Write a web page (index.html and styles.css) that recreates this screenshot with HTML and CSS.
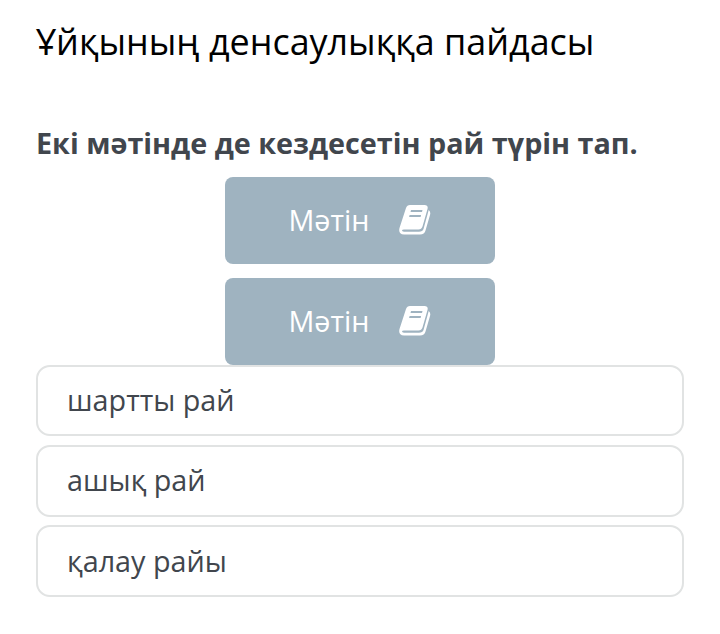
FILE: index.html
```html
<!DOCTYPE html>
<html lang="kk">
<head>
  <meta charset="UTF-8" />
  <title>Ұйқының денсаулыққа пайдасы</title>
  <meta name="viewport" content="width=device-width, initial-scale=1.0" />
  <link rel="stylesheet" href="styles.css">
</head>
<body>

<h1>Ұйқының денсаулыққа пайдасы</h1>

<h2>Екі мәтінде де кездесетін рай түрін тап.</h2>

<!-- Text buttons -->
<div class="texts">
  <button class="btn" type="button">
    <span>Мәтін</span>
    <svg class="icon" viewBox="0 0 32 30">
      <path fill="#fff" fill-rule="evenodd" d="M11 0H25.500Q29.500 0 28.500 4L23.500 21.500Q22.500 24.500 19.500 24.500H5Q3 24.500 3 25.600Q3 26.700 5 26.700H20Q23.500 26.700 24.500 24L29.700 5Q32 7 31 10L26.500 25.500Q25.500 29.500 21 29.500H5Q-1 29.500 .5 23L7 3Q8 0 11 0ZM12 5L11.500 7H23L23.500 5ZM10.600 10L10.100 12H21.600L22.100 10Z"/>
    </svg>
  </button>
  <button class="btn" type="button">
    <span>Мәтін</span>
    <svg class="icon" viewBox="0 0 32 30">
      <path fill="#fff" fill-rule="evenodd" d="M11 0H25.500Q29.500 0 28.500 4L23.500 21.500Q22.500 24.500 19.500 24.500H5Q3 24.500 3 25.600Q3 26.700 5 26.700H20Q23.500 26.700 24.500 24L29.700 5Q32 7 31 10L26.500 25.500Q25.500 29.500 21 29.500H5Q-1 29.500 .5 23L7 3Q8 0 11 0ZM12 5L11.500 7H23L23.500 5ZM10.600 10L10.100 12H21.600L22.100 10Z"/>
    </svg>
  </button>
</div>

<!-- Answers -->
<div class="answers">
  <div class="answer">шартты рай</div>
  <div class="answer">ашық рай</div>
  <div class="answer">қалау райы</div>
</div>

</body>
</html>
```
FILE: styles.css
```css
* { box-sizing: border-box; }
body { font-family: "Open Sans", sans-serif; margin: 0; padding: 0 36px; background: #fff; color: #41464d; }

h1 {
  margin: 0;
  padding-top: 17px;
  font-size: 35.9px;
  line-height: 50px;
  font-weight: 400;
  color: #000;
  white-space: nowrap;
}

h2 {
  margin: 56px 0 0;
  font-size: 28.75px;
  line-height: 40px;
  font-weight: 700;
  white-space: nowrap;
}

.texts {
  display: flex;
  flex-direction: column;
  align-items: center;
  gap: 14px;
  margin-top: 14px;
}

.btn {
  display: flex;
  align-items: center;
  justify-content: center;
  gap: 29px;
  width: 270px;
  height: 87px;
  padding: 0 1px 3px 0;
  border: none;
  border-radius: 8px;
  background: #9fb3c0;
  color: #fff;
  font-family: inherit;
  font-size: 28.75px;
  cursor: pointer;
}

.icon {
  width: 32px;
  height: 30px;
  margin-top: 2px;
}

.answers {
  display: flex;
  flex-direction: column;
  gap: 8.8px;
}

.answer {
  height: 71.4px;
  padding-left: 29px;
  border: 2px solid #e1e3e3;
  border-radius: 14px;
  font-size: 28.75px;
  line-height: 66px;
}

.answer:last-child { line-height: 68px; }
```
